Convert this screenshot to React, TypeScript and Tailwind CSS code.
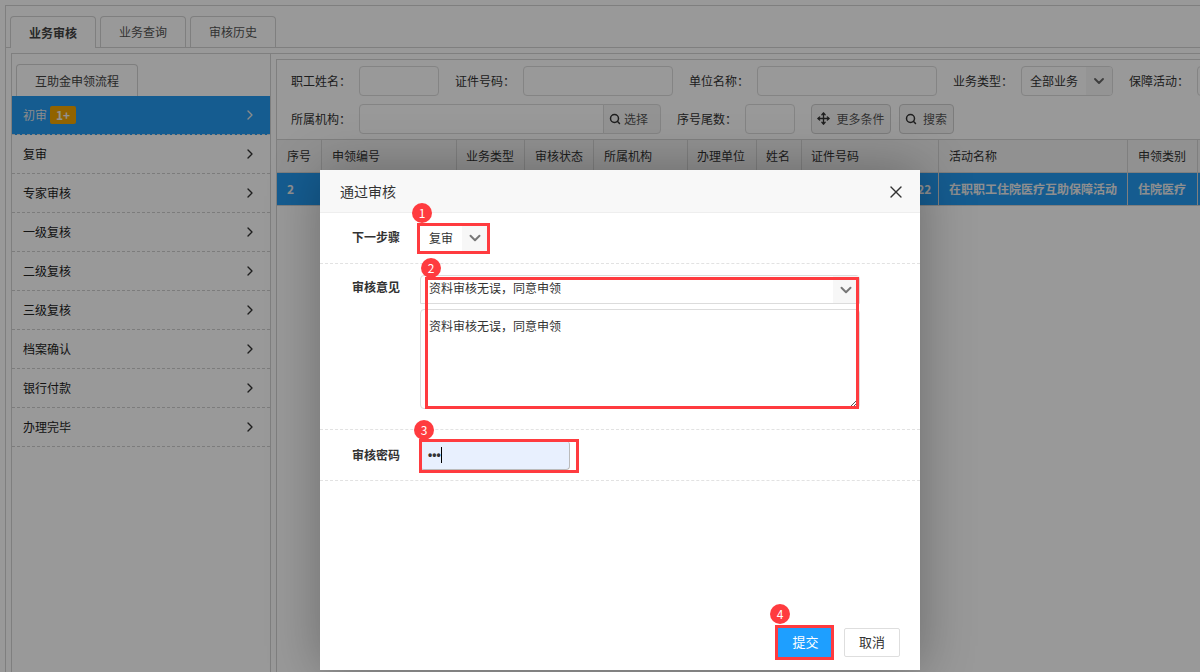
import React from "react";
import { ChevronDown, ChevronRight, Move, Search, X } from "lucide-react";

const font = "font-['Noto_Sans_CJK_SC','Liberation_Sans',sans-serif]";

const steps = ["复审", "专家审核", "一级复核", "二级复核", "三级复核", "档案确认", "银行付款", "办理完毕"];

const columns = [
  ["序号", "2", "pl-[10px]"],
  ["申领编号", "", "pl-[10px]"],
  ["业务类型", "", "pl-[9px]"],
  ["审核状态", "", "pl-[10px]"],
  ["所属机构", "", "pl-[10px]"],
  ["办理单位", "", "pl-[9px]"],
  ["姓名", "", "pl-[9px]"],
  ["证件号码", "11010119900101122", "pl-[9px]"],
  ["活动名称", "在职职工住院医疗互助保障活动", "pl-[10px]"],
  ["申领类别", "住院医疗", "pl-[10px]"],
  ["", "", ""],
];

const gridCols = "grid-cols-[45px_135px_68px_69px_94px_69px_45px_137px_189px_70px_40px]";
const opinion = "资料审核无误\uFF0C同意申领";

function Label({ children, className = "" }: { children: string; className?: string }) {
  return <span className={`w-[68px] shrink-0 text-xs text-[#333] ${className}`}>{children + "\uFF1A"}</span>;
}

function Input({ className }: { className: string }) {
  return <div className={`h-[30px] shrink-0 rounded-[4px] border border-[#dcdcdc] bg-white ${className}`} />;
}

function Badge({ n, className }: { n: number; className: string }) {
  return (
    <div className={`absolute flex h-5 w-5 items-center justify-center rounded-full bg-[#ff3b3f] text-xs text-white ${className}`}>
      {n}
    </div>
  );
}

function Marker({ className }: { className: string }) {
  return <div className={`pointer-events-none absolute border-[3px] border-[#ff3b3f] ${className}`} />;
}

export default function App() {
  return (
    <div className={`relative h-[672px] w-[1200px] overflow-hidden bg-white pl-[5px] pt-[5px] ${font}`}>
      <div className="h-full border-l border-t border-[#d4d4d4]">
        {/* Top tabs */}
        <div className="flex h-[42px] items-end gap-1 border-b border-[#d4d4d4] pl-1">
          <div className="-mb-px flex h-[32px] w-[86px] items-center justify-center rounded-t-[4px] border border-b-0 border-[#d4d4d4] bg-white text-xs font-bold text-[#444]">
            业务审核
          </div>
          <div className="flex h-[31px] w-[86px] items-center justify-center rounded-t-[4px] border border-b-0 border-[#d4d4d4] text-xs text-[#555]">
            业务查询
          </div>
          <div className="flex h-[31px] w-[86px] items-center justify-center rounded-t-[4px] border border-b-0 border-[#d4d4d4] text-xs text-[#555]">
            审核历史
          </div>
        </div>

        <div className="ml-[5px] mt-[5px] flex h-[620px] border-l border-t border-[#d4d4d4]">
          {/* Left column */}
          <div className="w-[259px] shrink-0 border-r border-[#d4d4d4]">
            <div className="flex h-[42px] items-end pl-1">
              <div className="flex h-[32px] w-[122px] items-center justify-center rounded-t-[4px] border border-b-0 border-[#d4d4d4] text-xs text-[#444]">
                互助金申领流程
              </div>
            </div>
            <div className="flex h-[39px] items-center justify-between border-b border-dashed border-[#ddd] bg-[#2399f0] pl-[11px] pr-3 text-xs text-[#e8e8e8]">
              <span className="flex items-center gap-[3px]">
                初审
                <span className="flex h-[18px] w-[26px] items-center justify-center rounded-[2px] bg-[#f2a500] font-bold text-[#f4f4f4]">1+</span>
              </span>
              <ChevronRight size={16} strokeWidth={2} />
            </div>
            {steps.map((s) => (
              <div key={s} className="flex h-[39px] items-center justify-between border-b border-dashed border-[#cfcfcf] pl-[11px] pr-3 text-xs text-[#222]">
                <span className="-mt-px">{s}</span>
                <ChevronRight size={16} strokeWidth={2} className="text-[#333]" />
              </div>
            ))}
          </div>

          {/* Right column */}
          <div className="min-w-0 flex-1 overflow-hidden pl-[5px] pt-[5px]">
            <div className="h-full border-l border-t border-[#d4d4d4]">
              <div className="flex h-[80px] flex-col gap-2 border-b border-[#d4d4d4] pl-[14px] pt-[6px]">
                <div className="flex items-center">
                  <Label>职工姓名</Label>
                  <Input className="mr-4 w-20" />
                  <Label>证件号码</Label>
                  <Input className="mr-4 w-[150px]" />
                  <Label>单位名称</Label>
                  <Input className="mr-4 w-[180px]" />
                  <Label>业务类型</Label>
                  <div className="mr-4 flex h-[30px] w-[92px] shrink-0 items-center overflow-hidden rounded-[4px] border border-[#dcdcdc] text-xs text-[#333]">
                    <span className="flex-1 pl-2">全部业务</span>
                    <span className="flex h-full w-[26px] items-center justify-center bg-[#f7f7f7] text-[#666]">
                      <ChevronDown size={16} strokeWidth={2.8} />
                    </span>
                  </div>
                  <Label>保障活动</Label>
                  <Input className="w-20" />
                </div>
                <div className="flex items-center">
                  <Label className="-mt-px">所属机构</Label>
                  <Input className="w-[245px] rounded-r-none" />
                  <div className="-ml-px mr-4 flex h-[30px] w-[58px] shrink-0 items-center gap-[3px] rounded-r-[4px] border border-[#dcdcdc] bg-[#f5f5f5] pb-px pl-[5px] text-xs text-[#555]">
                    <Search size={12} strokeWidth={3} className="text-[#333]" />
                    选择
                  </div>
                  <Label className="-mt-px">序号尾数</Label>
                  <Input className="mr-4 w-[50px]" />
                  <div className="mr-2 flex h-[30px] w-20 shrink-0 items-center justify-center gap-[6px] rounded-[4px] border border-[#cfcfcf] bg-[#f5f5f5] pb-px text-xs text-[#555]">
                    <Move size={13} strokeWidth={2.5} className="text-[#333]" />
                    更多条件
                  </div>
                  <div className="flex h-[30px] w-[55px] shrink-0 items-center gap-[6px] rounded-[4px] border border-[#cfcfcf] bg-[#f5f5f5] pb-px pl-[5px] text-xs text-[#555]">
                    <Search size={12} strokeWidth={3} className="text-[#333]" />
                    搜索
                  </div>
                </div>
              </div>

              <div className={`grid h-[33px] w-[1000px] ${gridCols} border-b border-[#d4d4d4] bg-[#f2f2f2]`}>
                {columns.map(([h, , a], i) => (
                  <div key={i} className={`flex items-center border-r border-[#d4d4d4] text-xs text-[#333] ${a}`}>{h}</div>
                ))}
              </div>
              <div className={`grid h-[33px] w-[1000px] ${gridCols} border-b border-[#d4d4d4] bg-[#2399f0]`}>
                {columns.map(([, v, a], i) => (
                  <div key={i} className={`flex items-center overflow-hidden whitespace-nowrap border-r border-[#d4d4d4] text-xs font-bold text-[#eee] ${a}`}>{v}</div>
                ))}
              </div>
            </div>
          </div>
        </div>
      </div>

      {/* Dimming layer */}
      <div className="absolute inset-0 bg-black/40" />

      {/* Dialog */}
      <div className="absolute left-[320px] top-[170px] flex h-[500px] w-[600px] flex-col bg-white shadow-[1px_1px_50px_rgba(0,0,0,0.3)]">
        <div className="flex h-[43px] shrink-0 items-center justify-between border-b border-[#eee] bg-[#f8f8f8] pl-5 pr-[14px]">
          <span className="text-sm text-[#333]">通过审核</span>
          <X size={20} strokeWidth={1.6} className="mt-[2px] text-[#333]" />
        </div>

        <div className="flex h-[51px] shrink-0 items-center border-b border-dashed border-[#e2e2e2] pl-8">
          <span className="-mt-[2px] w-[69px] text-xs font-bold text-[#333]">下一步骤</span>
          <div className="flex h-[28px] w-[67px] items-center text-xs text-[#333]">
            <span className="-mt-px flex-1 pl-2">复审</span>
            <span className="flex h-full w-[26px] items-center justify-center bg-[#f7f7f7] text-[#777]">
              <ChevronDown size={18} strokeWidth={2.6} />
            </span>
          </div>
        </div>

        <div className="flex h-[166px] shrink-0 items-start border-b border-dashed border-[#e2e2e2] pl-8 pt-[11px]">
          <span className="w-[68px] pt-[4px] text-xs font-bold text-[#333]">审核意见</span>
          <div className="w-[440px]">
            <div className="flex h-[29px] items-center rounded-t-[4px] border border-[#dcdcdc] text-xs text-[#333]">
              <span className="flex-1 pb-[3px] pl-2">{opinion}</span>
              <span className="flex h-full w-[26px] items-center justify-center bg-[#f7f7f7] text-[#777]">
                <ChevronDown size={18} strokeWidth={2.6} />
              </span>
            </div>
            <div className="relative mt-[5px] h-[100px] rounded-[4px] border border-[#dcdcdc] pl-2 pt-[8px] text-xs text-[#333]">
              {opinion}
              <svg viewBox="0 0 6 6" className="absolute bottom-[2px] right-[2px] h-[6px] w-[6px]">
                <path d="M0 6L6 0M3 6L6 3" stroke="#555" strokeWidth="1" fill="none" />
              </svg>
            </div>
          </div>
        </div>

        <div className="flex h-[51px] shrink-0 items-center border-b border-dashed border-[#e2e2e2] pl-8">
          <span className="-mt-px w-[68px] text-xs font-bold text-[#333]">审核密码</span>
          <div className="flex h-[29px] w-[150px] items-center rounded-[4px] border-b border-r border-[#bbb] bg-[#e8f0fe] pl-2 font-['Liberation_Sans',sans-serif] text-xs font-bold leading-none text-[#333]">
            •••
            <span className="h-[16px] w-px bg-black" />
          </div>
        </div>

        <div className="flex flex-1 items-end justify-end gap-[13px] pb-[13px] pr-5">
          <div className="flex h-[29px] w-[53px] items-center justify-center bg-[#1e9fff] pb-px pl-[2px] text-[13px] text-white">提交</div>
          <div className="flex h-[29px] w-[56px] items-center justify-center rounded-[2px] border border-[#dedede] pb-px text-[13px] text-[#333]">取消</div>
        </div>

        {/* Annotations */}
        <Marker className="left-[97px] top-[53px] h-[31px] w-[73px]" />
        <Marker className="left-[105px] top-[107px] h-[132px] w-[434px]" />
        <Marker className="left-[99px] top-[269px] h-[34px] w-[160px]" />
        <Marker className="left-[455px] top-[455px] h-[35px] w-[59px]" />
        <Badge n={1} className="left-[92px] top-[33px]" />
        <Badge n={2} className="left-[101px] top-[88px]" />
        <Badge n={3} className="left-[94px] top-[250px]" />
        <Badge n={4} className="left-[450px] top-[434px]" />
      </div>
    </div>
  );
}
